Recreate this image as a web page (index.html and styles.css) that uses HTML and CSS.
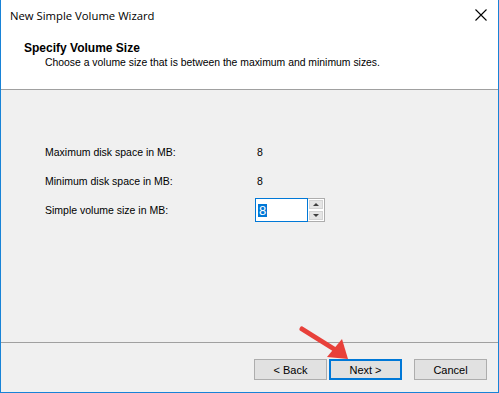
FILE: index.html
```html
<!DOCTYPE html>
<html lang="en">
<head>
    <meta charset="UTF-8">
    <title>New Simple Volume Wizard</title>
    <link rel="stylesheet" href="styles.css">
</head>
<body>
    <div class="window">
        <div class="titlebar">
            <span class="title">New Simple Volume Wizard</span>
            <svg class="close" width="12" height="12" viewBox="0 0 12 12">
                <path d="M0.5 0.5 L11.5 11.5 M11.5 0.5 L0.5 11.5" stroke="#000" stroke-width="1.1" fill="none"/>
            </svg>
        </div>

        <div class="header">
            <div class="heading">Specify Volume Size</div>
            <div class="subheading">Choose a volume size that is between the maximum and minimum sizes.</div>
        </div>

        <div class="content">
            <div class="row">
                <span class="label">Maximum disk space in MB:</span>
                <span class="value">8</span>
            </div>
            <div class="row">
                <span class="label">Minimum disk space in MB:</span>
                <span class="value">8</span>
            </div>
            <div class="row row-input">
                <span class="label">Simple volume size in MB:</span>
                <div class="spin">
                    <div class="spin-field"><span class="selected">8</span></div>
                    <div class="spin-buttons">
                        <div class="spin-btn"><span class="tri-up"></span></div>
                        <div class="spin-btn"><span class="tri-down"></span></div>
                    </div>
                </div>
            </div>
        </div>

        <div class="footer">
            <button class="btn">&lt; Back</button>
            <button class="btn btn-default">Next &gt;</button>
            <button class="btn btn-cancel">Cancel</button>
        </div>

        <!-- annotation arrow pointing at Next -->
        <svg class="arrow" width="60" height="40" viewBox="0 0 60 40">
            <path d="M4 4 L36 24" stroke="#e8403a" stroke-width="5" stroke-linecap="round" fill="none"/>
            <polygon points="29,32 44,14 50,34" fill="#e8403a"/>
        </svg>
    </div>
</body>
</html>
```

FILE: styles.css
```css
body {
    margin: 0;
    padding: 0;
    font-family: "Liberation Sans", Arial, sans-serif;
    font-size: 10.5px;
    color: #000;
}
.window {
    position: relative;
    width: 497px;
    height: 392px;
    border: 1px solid #1883d7;
    border-top: none;
    background-color: #f0f0f0;
}
.titlebar {
    height: 31px;
    display: flex;
    justify-content: space-between;
    align-items: center;
    padding: 0 11px 0 9px;
    background-color: #fff;
}
.title {
    font-family: "Open Sans", sans-serif;
    font-size: 11.3px;
    margin-top: -1px;
}
.close {
    margin-top: -1px;
}
.header {
    height: 59px;
    box-sizing: border-box;
    padding: 10px 0 0 23px;
    background-color: #fff;
    border-bottom: 1px solid #a0a0a0;
}
.heading {
    font-weight: bold;
    font-size: 12px;
    line-height: 14px;
}
.subheading {
    margin-left: 21px;
    line-height: 15px;
    font-size: 10.4px;
}
.content {
    height: 253px;
    box-sizing: border-box;
    padding: 53px 0 0 44px;
    border-bottom: 1px solid #a0a0a0;
}
.row {
    display: flex;
    align-items: center;
    height: 18px;
    margin-bottom: 11px;
}
.row-input {
    height: 24px;
    margin-top: -3px;
}
.label {
    width: 212px;
}
.spin {
    display: flex;
    margin-left: -2px;
}
.spin-field {
    width: 49px;
    height: 22px;
    border: 1px solid #0078d7;
    background-color: #fff;
    display: flex;
    align-items: center;
    padding-left: 2px;
}
.selected {
    background-color: #0078d7;
    color: #fff;
    font-size: 13px;
    line-height: 13px;
    padding: 0 1px;
}
.spin-buttons {
    width: 14px;
    height: 22px;
    border: 1px solid #adadad;
    border-left: none;
    display: flex;
    flex-direction: column;
    justify-content: space-between;
    padding: 0 1px;
    background-color: #fff;
}
.spin-btn {
    height: 10px;
    background-color: #e5e5e5;
    border: 1px solid #d4d4d4;
    box-sizing: border-box;
    display: flex;
    align-items: center;
    justify-content: center;
    margin: 1px 0;
}
.tri-up {
    width: 0;
    height: 0;
    border-left: 3px solid transparent;
    border-right: 3px solid transparent;
    border-bottom: 3px solid #404040;
}
.tri-down {
    width: 0;
    height: 0;
    border-left: 3px solid transparent;
    border-right: 3px solid transparent;
    border-top: 3px solid #404040;
}
.footer {
    display: flex;
    justify-content: flex-end;
    padding: 16px 11px 0 0;
}
.btn {
    width: 73px;
    height: 21px;
    border: 1px solid #adadad;
    background-color: #e1e1e1;
    font-family: "Liberation Sans", Arial, sans-serif;
    font-size: 11px;
    color: #000;
    padding: 0;
    margin-left: 2px;
}
.btn-default {
    border: 2px solid #0078d7;
}
.btn-cancel {
    margin-left: 12px;
}
.arrow {
    position: absolute;
    left: 297px;
    top: 325px;
}
```
